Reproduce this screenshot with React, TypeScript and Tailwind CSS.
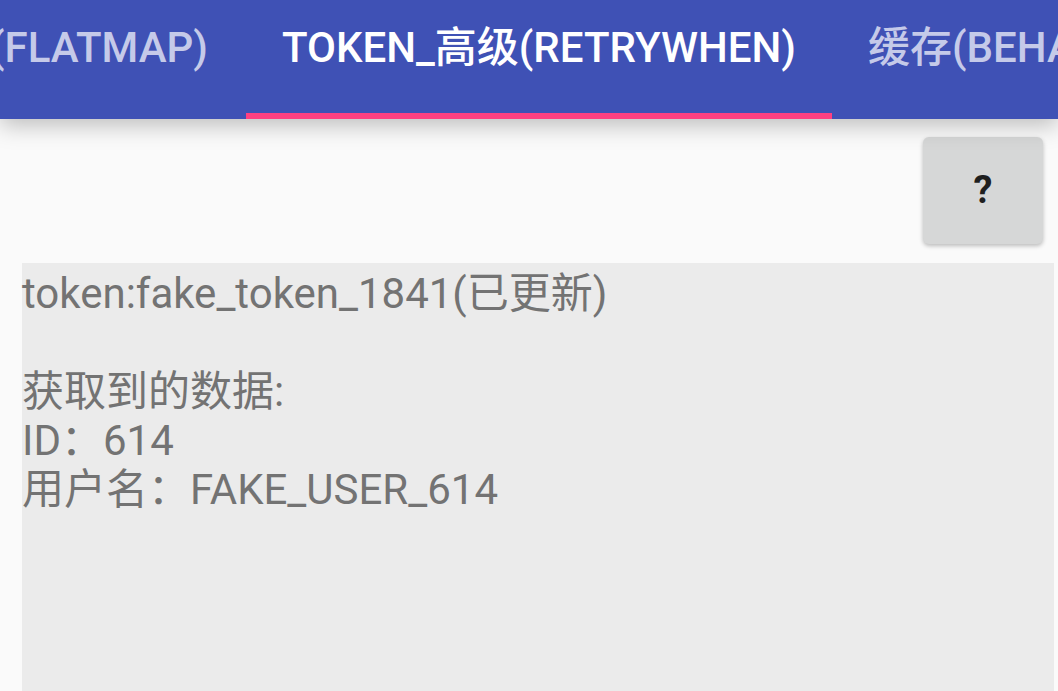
import React from 'react'

const TABS = [
  { label: '(FLATMAP)', active: false },
  { label: 'TOKEN_高级(RETRYWHEN)', active: true },
  { label: '缓存(BEHAVIORSUBJECT)', active: false },
]

const font = { fontFamily: 'Roboto, "Noto Sans CJK SC", sans-serif' }

export default function App() {
  return (
    <div className="w-[1058px] h-[691px] overflow-hidden bg-[#fafafa]" style={font}>
      <div className="relative z-10 h-[119px] bg-[#3f51b5] flex overflow-hidden shadow-[0_6px_22px_rgba(0,0,0,0.25)]">
        {TABS.map((tab, i) => (
          <div
            key={tab.label}
            className={`relative flex-none h-full flex justify-end pt-[24px] whitespace-nowrap ${
              i === 0 ? 'w-[246px] pr-[38px]' : 'px-[36px]'
            }`}
          >
            <span
              className={`text-[42px] leading-[48px] font-medium ${
                tab.active ? 'text-white' : 'text-[#c5cae9]'
              }`}
            >
              {tab.label}
            </span>
            {tab.active && <div className="absolute left-0 right-0 bottom-0 h-[6px] bg-[#ff4081]" />}
          </div>
        ))}
      </div>

      <div className="flex justify-end pt-[18px] pr-[15px]">
        <button className="w-[120px] h-[107px] rounded-[6px] bg-[#d6d7d7] shadow-[0_2px_4px_rgba(0,0,0,0.25)] text-[38px] font-bold text-[#1f1f1f]">
          ?
        </button>
      </div>

      <div className="mt-[19px] ml-[22px] mr-[4px] h-[500px] bg-[#ebebeb] pt-[6px] text-[42px] leading-[49px] text-[#737373]">
        <div>token:fake_token_1841(已更新)</div>
        <div>&nbsp;</div>
        <div>获取到的数据:</div>
        <div>ID：614</div>
        <div>用户名：FAKE_USER_614</div>
      </div>
    </div>
  )
}
